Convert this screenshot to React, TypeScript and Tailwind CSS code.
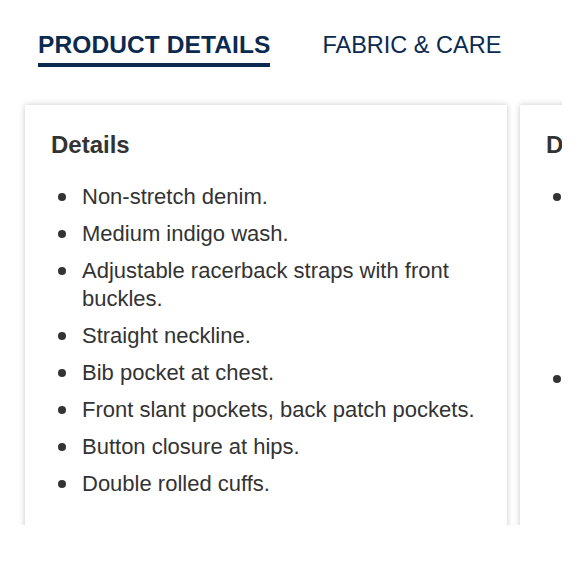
import React from 'react';

const details = [
  'Non-stretch denim.',
  'Medium indigo wash.',
  'Adjustable racerback straps with front buckles.',
  'Straight neckline.',
  'Bib pocket at chest.',
  'Front slant pockets, back patch pockets.',
  'Button closure at hips.',
  'Double rolled cuffs.',
];

const dimensions = [
  'Model is 5\'10" and wearing\na size small. Inseam measures\napproximately 27 inches on a\nsize small, rise measures 11\ninches. Length may vary slightly\nby size.',
  'Imported.',
];

function Bullet({ text }: { text: string }) {
  return (
    <li className="flex items-start gap-4">
      <span className="h-[28px] flex items-center shrink-0 ml-[7px]">
        <span className="block w-2 h-2 rounded-full bg-[#333]" />
      </span>
      <span className="text-[22px] leading-[28px] text-[#333] whitespace-pre-line">{text}</span>
    </li>
  );
}

function Card({ title, items, firstGap }: { title: string; items: string[]; firstGap?: boolean }) {
  return (
    <div className="shrink-0 w-[482px] h-[480px] bg-white shadow-[0_0_6px_rgba(0,0,0,0.22)] px-[26px] pt-6">
      <h3 className="text-[24px] leading-[32px] font-bold text-[#333]">{title}</h3>
      <ul className={`mt-[22px] flex flex-col ${firstGap ? 'gap-[14px]' : 'gap-[9px]'}`}>
        {items.map((t) => (
          <Bullet key={t} text={t} />
        ))}
      </ul>
    </div>
  );
}

export default function App() {
  return (
    <div className="w-[580px] h-[580px] bg-white font-['Liberation_Sans',Arial,sans-serif]">
      {/* Tabs */}
      <div className="flex gap-[52px] pl-[38px] pt-[31px]">
        <div className="border-b-4 border-[#0c2a50] pb-1">
          <span className="block text-[24.5px] leading-[28px] font-bold tracking-[0.1px] text-[#0c2a50]">PRODUCT DETAILS</span>
        </div>
        <div className="border-b-4 border-transparent pb-1">
          <span className="block text-[23.5px] leading-[28px] text-[#0c2a50]">FABRIC &amp; CARE</span>
        </div>
      </div>

      {/* Cards carousel */}
      <div className="mt-[28px] w-[562px] h-[430px] overflow-hidden flex gap-[13px] pl-[25px] pt-[10px]">
        <Card title="Details" items={details} />
        <Card title="Dimensions" items={dimensions} firstGap />
      </div>
    </div>
  );
}
